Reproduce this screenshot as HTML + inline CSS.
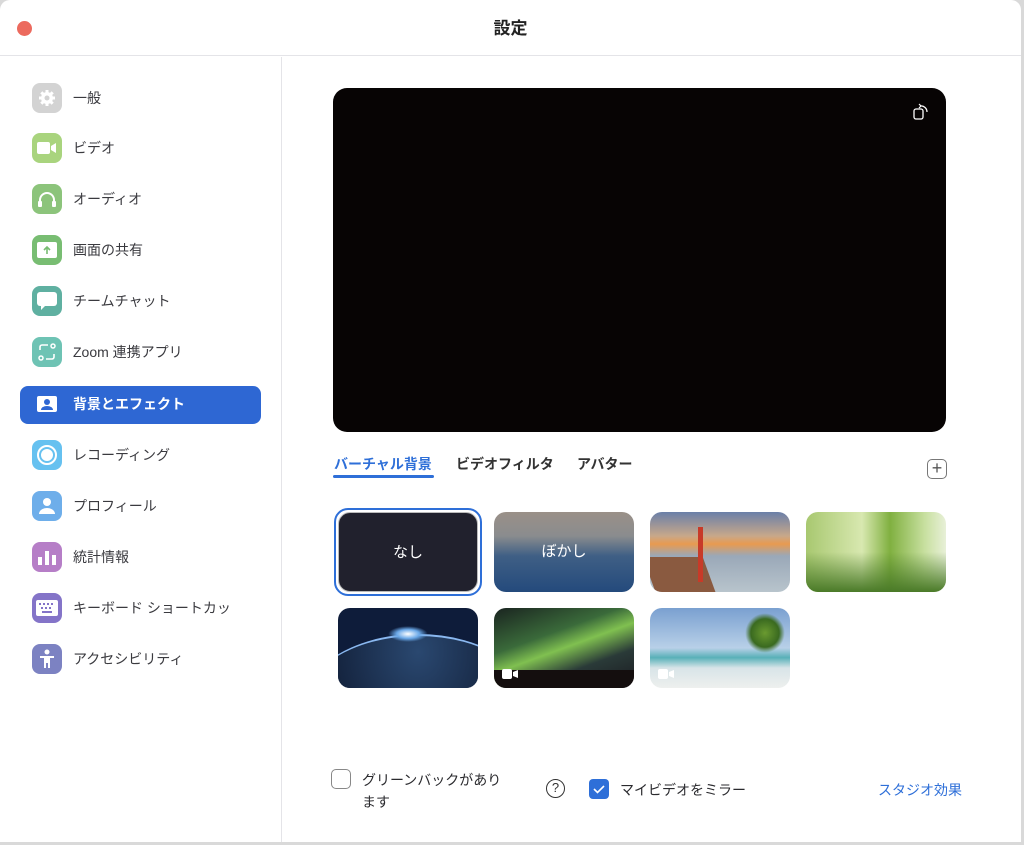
<!DOCTYPE html>
<html><head><meta charset="utf-8"><style>
*{margin:0;padding:0;box-sizing:border-box}
body{width:1024px;height:845px;background:#d9d9d9;font-family:"Liberation Sans","Noto Sans CJK JP",sans-serif;overflow:hidden;position:relative}
.win{position:absolute;left:0;top:0;width:1021px;height:842px;background:#fff;border-radius:10px 10px 0 0;overflow:hidden}
.hdr{position:absolute;left:0;top:0;width:100%;height:56px;border-bottom:1px solid #e4e4e8;text-align:center;font-size:17px;font-weight:bold;line-height:58px;color:#222}
.red{position:absolute;left:17px;top:21px;width:15px;height:15px;border-radius:50%;background:#ec6a5e}
.side{position:absolute;left:0;top:57px;width:282px;height:785px;border-right:1px solid #e4e4e8}
.it{position:absolute;left:32px;height:30px;display:flex;align-items:center;font-size:14px;color:#3a3a3f}
.ic{width:30px;height:30px;border-radius:8px;margin-right:11px;display:flex;align-items:center;justify-content:center}
.sel{position:absolute;left:20px;top:329px;width:241px;height:38px;background:#2e67d3;border-radius:8px}
.prev{position:absolute;left:333px;top:88px;width:613px;height:344px;background:#070404;border-radius:14px}
.tab{position:absolute;top:454px;font-size:14px;font-weight:bold;color:#333}
.th{position:absolute;width:140px;height:80px;border-radius:12px;overflow:hidden}
.lbl{position:absolute;font-size:14px;color:#2a2a2e}
</style></head><body>
<div class="win">
<div class="hdr">設定</div><div class="red"></div>
<div class="side">
<div class="sel"></div>
<div class="it" style="top:26px"><div class="ic" style="background:#d3d3d3"><svg width="18" height="18" viewBox="0 0 18 18"><circle cx="9" cy="9" r="6" fill="#fff"/><g stroke="#fff" stroke-width="3"><path d="M9 1v16M1 9h16M3.3 3.3l11.4 11.4M14.7 3.3L3.3 14.7"/></g><circle cx="9" cy="9" r="2.5" fill="#d3d3d3"/></svg></div>一般</div>
<div class="it" style="top:76px"><div class="ic" style="background:#a9d47e"><svg width="20" height="14"><rect x="0" y="1" width="13" height="12" rx="2" fill="#fff"/><path d="M14 5l5-3v10l-5-3z" fill="#fff"/></svg></div>ビデオ</div>
<div class="it" style="top:127px"><div class="ic" style="background:#8cc47b"><svg width="20" height="18"><path d="M3 14V10a7 7 0 0 1 14 0v4" stroke="#fff" stroke-width="2" fill="none"/><rect x="1" y="11" width="4" height="6" rx="1" fill="#fff"/><rect x="15" y="11" width="4" height="6" rx="1" fill="#fff"/></svg></div>オーディオ</div>
<div class="it" style="top:178px"><div class="ic" style="background:#78bd72"><svg width="20" height="16"><rect x="0" y="0" width="20" height="16" rx="2" fill="#fff"/><path d="M10 12V5M7 8l3-3 3 3" stroke="#78bd72" stroke-width="1.6" fill="none"/></svg></div>画面の共有</div>
<div class="it" style="top:229px"><div class="ic" style="background:#5fb0a1"><svg width="20" height="18"><rect x="0" y="0" width="20" height="14" rx="3" fill="#fff"/><path d="M4 13v5l5-5z" fill="#fff"/></svg></div>チームチャット</div>
<div class="it" style="top:280px"><div class="ic" style="background:#6ec3b4"><svg width="20" height="20"><path d="M3 8V5a2 2 0 0 1 2-2h6M17 12v3a2 2 0 0 1-2 2H9" stroke="#fff" stroke-width="1.6" fill="none"/><circle cx="16" cy="4" r="2" stroke="#fff" stroke-width="1.5" fill="none"/><circle cx="4" cy="16" r="2" stroke="#fff" stroke-width="1.5" fill="none"/></svg></div>Zoom 連携アプリ</div>
<div class="it" style="top:332px;color:#fff;font-weight:bold"><div class="ic"><svg width="20" height="16"><rect x="0" y="0" width="20" height="16" rx="2" fill="#fff"/><circle cx="10" cy="6" r="3" fill="#2e67d3"/><path d="M4 14a6 4 0 0 1 12 0z" fill="#2e67d3"/></svg></div>背景とエフェクト</div>
<div class="it" style="top:383px"><div class="ic" style="background:#66c1f0"><svg width="22" height="22"><circle cx="11" cy="11" r="9" stroke="#fff" stroke-width="2" fill="none"/><circle cx="11" cy="11" r="6" fill="#fff"/></svg></div>レコーディング</div>
<div class="it" style="top:434px"><div class="ic" style="background:#6eaeea"><svg width="18" height="18"><circle cx="9" cy="5" r="4" fill="#fff"/><path d="M1 17a8 6 0 0 1 16 0z" fill="#fff"/></svg></div>プロフィール</div>
<div class="it" style="top:485px"><div class="ic" style="background:#b67ec7"><svg width="18" height="16"><rect x="0" y="8" width="4" height="8" fill="#fff"/><rect x="7" y="2" width="4" height="14" fill="#fff"/><rect x="14" y="6" width="4" height="10" fill="#fff"/></svg></div>統計情報</div>
<div class="it" style="top:536px"><div class="ic" style="background:#8474c8"><svg width="22" height="16"><rect x="0" y="0" width="22" height="16" rx="2" fill="#fff"/><g fill="#8474c8"><rect x="3" y="3" width="2" height="2"/><rect x="7" y="3" width="2" height="2"/><rect x="11" y="3" width="2" height="2"/><rect x="15" y="3" width="2" height="2"/><rect x="5" y="7" width="2" height="2"/><rect x="9" y="7" width="2" height="2"/><rect x="13" y="7" width="2" height="2"/><rect x="6" y="11" width="10" height="2"/></g></svg></div>キーボード ショートカッ</div>
<div class="it" style="top:587px"><div class="ic" style="background:#7c82c2"><svg width="18" height="20"><circle cx="9" cy="3" r="2.5" fill="#fff"/><path d="M2 7h14v2h-4v10h-2v-5h-2v5H6V9H2z" fill="#fff"/></svg></div>アクセシビリティ</div>
</div>
<div class="prev"></div>
<svg style="position:absolute;left:912px;top:103px" width="18" height="18"><rect x="2" y="6" width="9" height="10" rx="2" stroke="#fff" stroke-width="1.3" fill="none"/><path d="M8 3a6 6 0 0 1 7 6" stroke="#fff" stroke-width="1.3" fill="none"/><path d="M7 1l2 2-2 2" stroke="#fff" stroke-width="1.2" fill="none"/></svg>
<div class="tab" style="left:334px;color:#2e6fd8">バーチャル背景</div>
<div style="position:absolute;left:333px;top:475px;width:101px;height:3px;background:#2e6fd8;border-radius:2px"></div>
<div class="tab" style="left:456px">ビデオフィルタ</div>
<div class="tab" style="left:577px">アバター</div>
<div style="position:absolute;left:927px;top:459px;width:20px;height:20px;border:1.5px solid #777;border-radius:5px;text-align:center;line-height:16px;font-size:18px;color:#555">+</div>
<div style="position:absolute;left:334px;top:508px;width:148px;height:88px;border:2px solid #2e6fd8;border-radius:14px"></div>
<div class="th" style="left:338px;top:512px;background:#21212d;color:#fff;font-size:15px;text-align:center;line-height:80px;border:1px solid #bbb">なし</div>
<div class="th" style="left:494px;top:512px;background:linear-gradient(#9a9088 0%,#8a8c8e 30%,#3f5f85 55%,#244a7c 100%);color:#fff;font-size:15px;text-align:center;line-height:80px">ぼかし</div>
<div class="th" style="left:650px;top:512px;background:linear-gradient(#6a7fa8 0%,#c8a88a 30%,#e89a50 40%,#9aa8b8 55%,#b8c4cc 100%)"><div style="position:absolute;left:0;top:45px;width:60px;height:40px;background:#8a5a40;transform:skewX(20deg)"></div><div style="position:absolute;left:48px;top:15px;width:5px;height:55px;background:#c83a28"></div></div>
<div class="th" style="left:806px;top:512px;background:linear-gradient(90deg,#a8c870,#d8e8b0 40%,#80b040 60%,#c8e0a0 85%,#e8f0d8)"><div style="position:absolute;bottom:0;width:100%;height:40px;background:linear-gradient(transparent,#4a7a28)"></div></div>
<div class="th" style="left:338px;top:608px;background:#0e1c3a"><div style="position:absolute;left:-40px;top:26px;width:240px;height:160px;border-radius:50%;border-top:2px solid #8ab8f0;background:radial-gradient(ellipse at 50% 10%,#2a4870,#101c34 60%)"></div><div style="position:absolute;left:50px;top:18px;width:40px;height:16px;border-radius:50%;background:radial-gradient(#ffffff,#6aa8e8 40%,transparent 70%)"></div></div>
<div class="th" style="left:494px;top:608px;background:linear-gradient(160deg,#1a2420 0%,#3a6a3a 35%,#80c050 50%,#2a3a38 70%,#1a1a20 100%)"><div style="position:absolute;bottom:0;width:100%;height:18px;background:#140e0e"></div><svg style="position:absolute;left:8px;top:61px" width="16" height="10"><rect width="10" height="10" rx="2" fill="#fff"/><path d="M11 3l5-2v8l-5-2z" fill="#fff"/></svg></div>
<div class="th" style="left:650px;top:608px;background:linear-gradient(#7aa0d0 0%,#b8d0e8 50%,#58b0b8 62%,#d8e4e8 75%,#eef0ee 100%)"><div style="position:absolute;left:95px;top:5px;width:40px;height:40px;border-radius:50%;background:radial-gradient(#6a9a30,#3a6a20 50%,transparent 70%)"></div><svg style="position:absolute;left:8px;top:61px" width="16" height="10"><rect width="10" height="10" rx="2" fill="#fff"/><path d="M11 3l5-2v8l-5-2z" fill="#fff"/></svg></div>
<div style="position:absolute;left:331px;top:769px;width:20px;height:20px;border:1.5px solid #888;border-radius:5px"></div>
<div class="lbl" style="left:362px;top:769px;line-height:22px">グリーンバックがあり<br>ます</div>
<div style="position:absolute;left:546px;top:779px;width:19px;height:19px;border:1.5px solid #333;border-radius:50%;text-align:center;font-size:13px;line-height:16px;color:#333">?</div>
<div style="position:absolute;left:589px;top:779px;width:20px;height:20px;background:#2e6fd8;border-radius:4px"><svg width="20" height="20"><path d="M5 10l3.5 3.5L15 7" stroke="#fff" stroke-width="1.6" fill="none"/></svg></div>
<div class="lbl" style="left:620px;top:780px">マイビデオをミラー</div>
<div class="lbl" style="left:878px;top:780px;color:#2e6fd8">スタジオ効果</div>
</div>
</body></html>
